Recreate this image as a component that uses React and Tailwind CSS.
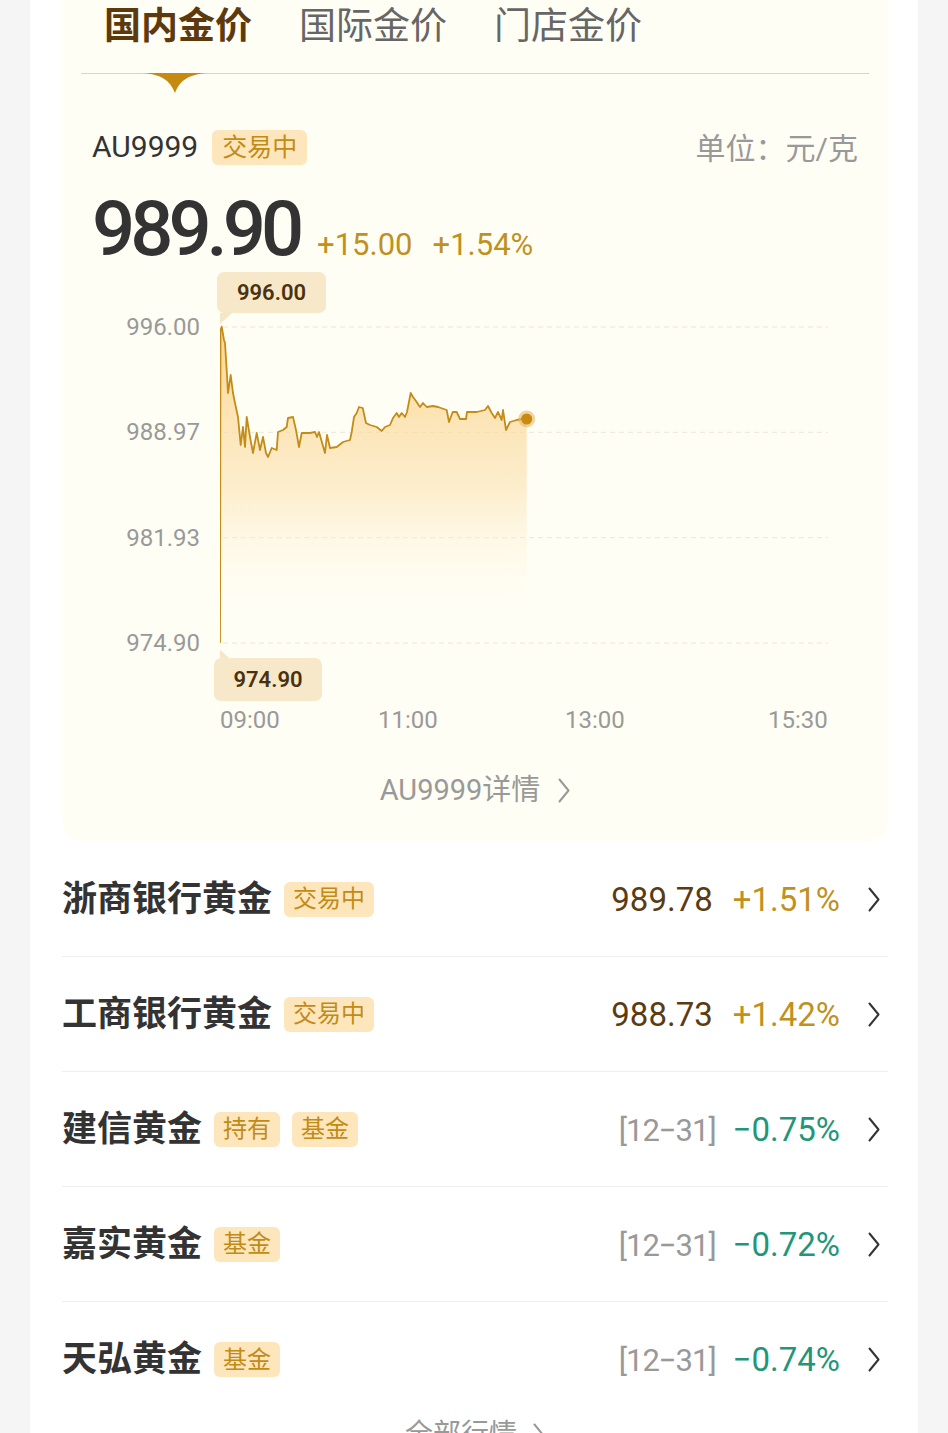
import React from "react";

const FONT = { fontFamily: "Roboto, 'Noto Sans CJK SC', sans-serif" };

// page coordinates of the price line
const PTS = [
  [220, 643], [220.5, 330], [221.7, 326.7], [224, 340], [225, 343], [226.7, 370], [228, 393],
  [230.7, 375], [233, 393], [235, 403], [238, 417], [240.7, 445], [243, 427], [245, 447],
  [246.7, 417], [250, 437], [253, 453], [256.7, 433], [260, 450], [263, 437], [266, 453],
  [268, 457], [271.7, 448], [276.7, 450], [278, 432], [283, 430], [286.7, 427], [288, 418],
  [293, 417], [296, 430], [299, 447], [301.7, 433], [310, 433], [315, 432], [317, 437],
  [319, 432], [322.7, 445], [325, 453], [327, 435], [330, 448], [336.7, 447], [343, 442],
  [350, 440], [351.7, 432], [354, 417], [356.7, 413], [359, 407], [362.7, 408], [366, 423],
  [370, 425], [376.7, 427], [381.7, 431], [385, 427], [390, 425], [393, 418], [396.7, 413],
  [399, 417], [401.7, 413], [405, 417], [407, 412], [410.7, 393], [413, 397], [416.7, 402],
  [420, 407], [423, 403], [426.7, 407], [433, 406], [438, 407], [446.7, 410], [449, 422],
  [452.7, 412], [456.7, 412], [460, 419], [466, 419], [467, 412], [476.7, 412], [485, 410],
  [488, 406], [491.7, 413], [495, 418], [498, 412], [501.7, 420], [503, 410], [506, 430],
  [510, 422], [516.7, 420], [521.7, 419], [526.7, 419],
];

const OX = 220;
const OY = 267;
const lineD = PTS.map((p, i) => `${i ? "L" : "M"}${(p[0] - OX).toFixed(1)} ${(p[1] - OY).toFixed(1)}`).join(" ");
const areaD =
  PTS.slice(1).map((p, i) => `${i ? "L" : "M"}${(p[0] - OX).toFixed(1)} ${(p[1] - OY).toFixed(1)}`).join(" ") +
  ` L${(526.7 - OX).toFixed(1)} ${640 - OY} L${(220.5 - OX).toFixed(1)} ${640 - OY} Z`;

function Chevron({ className = "", color = "#333" }) {
  return (
    <svg className={className} viewBox="0 0 12 25" fill="none">
      <polyline points="1.5,1.5 10.5,12.5 1.5,23.5" stroke={color} strokeWidth="2" strokeLinecap="round" strokeLinejoin="round" />
    </svg>
  );
}

function Badge({ children }) {
  return (
    <span className="inline-flex h-[35px] items-center rounded-[6px] bg-[#fde6bb] px-[9px] text-[24px] leading-none text-[#c28b17]">
      {children}
    </span>
  );
}

function Row({ name, badges, left, right, rightColor, leftColor, last, leftSize, gap }) {
  return (
    <div className={`flex h-[115px] items-center ${last ? "" : "border-b border-[#eeeeee]"}`}>
      <span className="text-[35px] font-bold leading-none text-[#333]">{name}</span>
      <div className="ml-[12px] flex gap-[12px]">
        {badges.map((b) => (
          <Badge key={b}>{b}</Badge>
        ))}
      </div>
      <div className="ml-auto flex items-baseline">
        <span className={`${leftSize} leading-none`} style={{ color: leftColor }}>
          {left}
        </span>
        <span className={`${gap} text-[33px] leading-none`} style={{ color: rightColor }}>
          {right}
        </span>
      </div>
      <Chevron className="ml-[28px] mr-[8px] h-[25px] w-[12px]" />
    </div>
  );
}

export default function App() {
  return (
    <div className="h-[1433px] w-[948px] overflow-hidden bg-[#f5f5f5] pl-[30px] pr-[30px]" style={FONT}>
      <div className="min-h-[1433px] w-[888px] bg-white pl-[32px] pr-[30px]">
        {/* cream panel */}
        <div className="h-[842px] rounded-b-[22px] bg-[#fffef4]">
          {/* tabs */}
          <div className="mx-[19px] flex h-[74px] gap-[47px] border-b border-[#e2d5b2] pl-[23px] pt-[8px]">
            <div className="relative h-[37px] text-[37px] font-bold leading-[37px] text-[#5c3a0e]">
              国内金价
              <svg className="absolute left-[39px] top-[65px] h-[20px] w-[64px]" viewBox="0 0 64 20">
                <path d="M0 0 H64 C46 1.5 37 7 32 20 C27 7 18 1.5 0 0 Z" fill="#c68912" />
              </svg>
            </div>
            <div className="h-[37px] text-[37px] leading-[37px] text-[#666]">国际金价</div>
            <div className="h-[37px] text-[37px] leading-[37px] text-[#666]">门店金价</div>
          </div>

          <div className="px-[30px]">
            {/* info row */}
            <div className="mt-[55px] flex h-[36px] items-center">
              <span className="text-[30px] leading-none text-[#333]">AU9999</span>
              <span className="ml-[14px] inline-flex h-[35px] items-center rounded-[6px] bg-[#fde6bb] px-[10px] text-[25px] leading-none text-[#c28b17]">
                交易中
              </span>
              <span className="ml-auto mt-[4px] text-[30px] leading-none text-[#999]">单位：元/克</span>
            </div>

            {/* price row */}
            <div className="mt-[26px] flex h-[76px] items-baseline">
              <span className="text-[76px] font-medium leading-[76px] tracking-[-5px] text-[#333]">989.90</span>
              <span className="ml-[18px] text-[31px] leading-none text-[#c0911f]">+15.00</span>
              <span className="ml-[20px] text-[31px] leading-none text-[#c0911f]">+1.54%</span>
            </div>

            {/* chart */}
            <div className="relative flex h-[400px]">
              <div className="mt-[48px] flex h-[340px] w-[108px] flex-col justify-between text-right text-[24px] leading-[24px] text-[#999]">
                <span>996.00</span>
                <span>988.97</span>
                <span>981.93</span>
                <span>974.90</span>
              </div>
              <svg className="ml-[20px] h-[400px] w-[612px]" viewBox="0 0 612 400" fill="none">
                <defs>
                  <linearGradient id="fillg" x1="0" y1={330 - OY} x2="0" y2={620 - OY} gradientUnits="userSpaceOnUse">
                    <stop offset="0" stopColor="#f9cf80" stopOpacity="0.85" />
                    <stop offset="0.55" stopColor="#fbe0ad" stopOpacity="0.55" />
                    <stop offset="1" stopColor="#fffef4" stopOpacity="0" />
                  </linearGradient>
                </defs>
                {[327, 432.3, 537.7, 643].map((y) => (
                  <line key={y} x1="3" x2="608" y1={y - OY} y2={y - OY} stroke="#eee7d6" strokeWidth="1" strokeDasharray="5 4" />
                ))}
                <path d={areaD} fill="url(#fillg)" />
                <path d={lineD} stroke="#c38c18" strokeWidth="1.8" strokeLinejoin="round" />
                <circle cx={526.7 - OX} cy={419 - OY} r="8.5" fill="#e6b96a" opacity="0.6" />
                <circle cx={526.7 - OX} cy={419 - OY} r="5.5" fill="#c98a12" />
                {/* tooltip tails */}
                <path d={`M-2 ${313 - OY} L12 ${313 - OY} L-2 ${326 - OY} Z`} fill="#f5e6c8" />
                <path d={`M-5 ${658 - OY} L9 ${658 - OY} L-5 ${645 - OY} Z`} fill="#f5e6c8" />
              </svg>
              <div className="absolute left-[125px] top-[5px] flex h-[41px] w-[109px] items-center justify-center rounded-[7px] bg-[#f7e8ca] text-[22px] font-semibold leading-none text-[#4a3210]">
                996.00
              </div>
              <div className="absolute left-[122px] top-[391px] flex h-[43px] w-[108px] items-center justify-center rounded-[7px] bg-[#f7e8ca] text-[22px] font-semibold leading-none text-[#4a3210]">
                974.90
              </div>
            </div>

            {/* x axis */}
            <div className="mt-[39px] flex h-[28px] pl-[128px] text-[24px] leading-[28px] text-[#999]">
              <span className="w-[158px]">09:00</span>
              <span className="w-[187px]">11:00</span>
              <span className="w-[203px]">13:00</span>
              <span>15:30</span>
            </div>

            {/* detail link */}
            <div className="mt-[38px] flex h-[36px] items-center justify-center text-[29px] leading-none text-[#999]">
              <span>AU9999详情</span>
              <Chevron className="ml-[18px] h-[25px] w-[12px]" color="#999" />
            </div>
          </div>
        </div>

        {/* list */}
        <div>
          <Row name="浙商银行黄金" badges={["交易中"]} left="989.78" right="+1.51%" leftColor="#5b3b12" rightColor="#c0911f" leftSize="text-[33px]" gap="ml-[20px]" />
          <Row name="工商银行黄金" badges={["交易中"]} left="988.73" right="+1.42%" leftColor="#5b3b12" rightColor="#c0911f" leftSize="text-[33px]" gap="ml-[20px]" />
          <Row name="建信黄金" badges={["持有", "基金"]} left="[12−31]" right="−0.75%" leftColor="#999" rightColor="#22967a" leftSize="text-[31px] tracking-[-1px]" gap="ml-[17px]" />
          <Row name="嘉实黄金" badges={["基金"]} left="[12−31]" right="−0.72%" leftColor="#999" rightColor="#22967a" leftSize="text-[31px] tracking-[-1px]" gap="ml-[17px]" />
          <Row name="天弘黄金" badges={["基金"]} left="[12−31]" right="−0.74%" leftColor="#999" rightColor="#22967a" leftSize="text-[31px] tracking-[-1px]" gap="ml-[17px]" last />
          <div className="flex h-[36px] items-center justify-center text-[28px] leading-none text-[#999]">
            <span>全部行情</span>
            <Chevron className="ml-[16px] h-[25px] w-[12px]" color="#999" />
          </div>
        </div>
      </div>
    </div>
  );
}
